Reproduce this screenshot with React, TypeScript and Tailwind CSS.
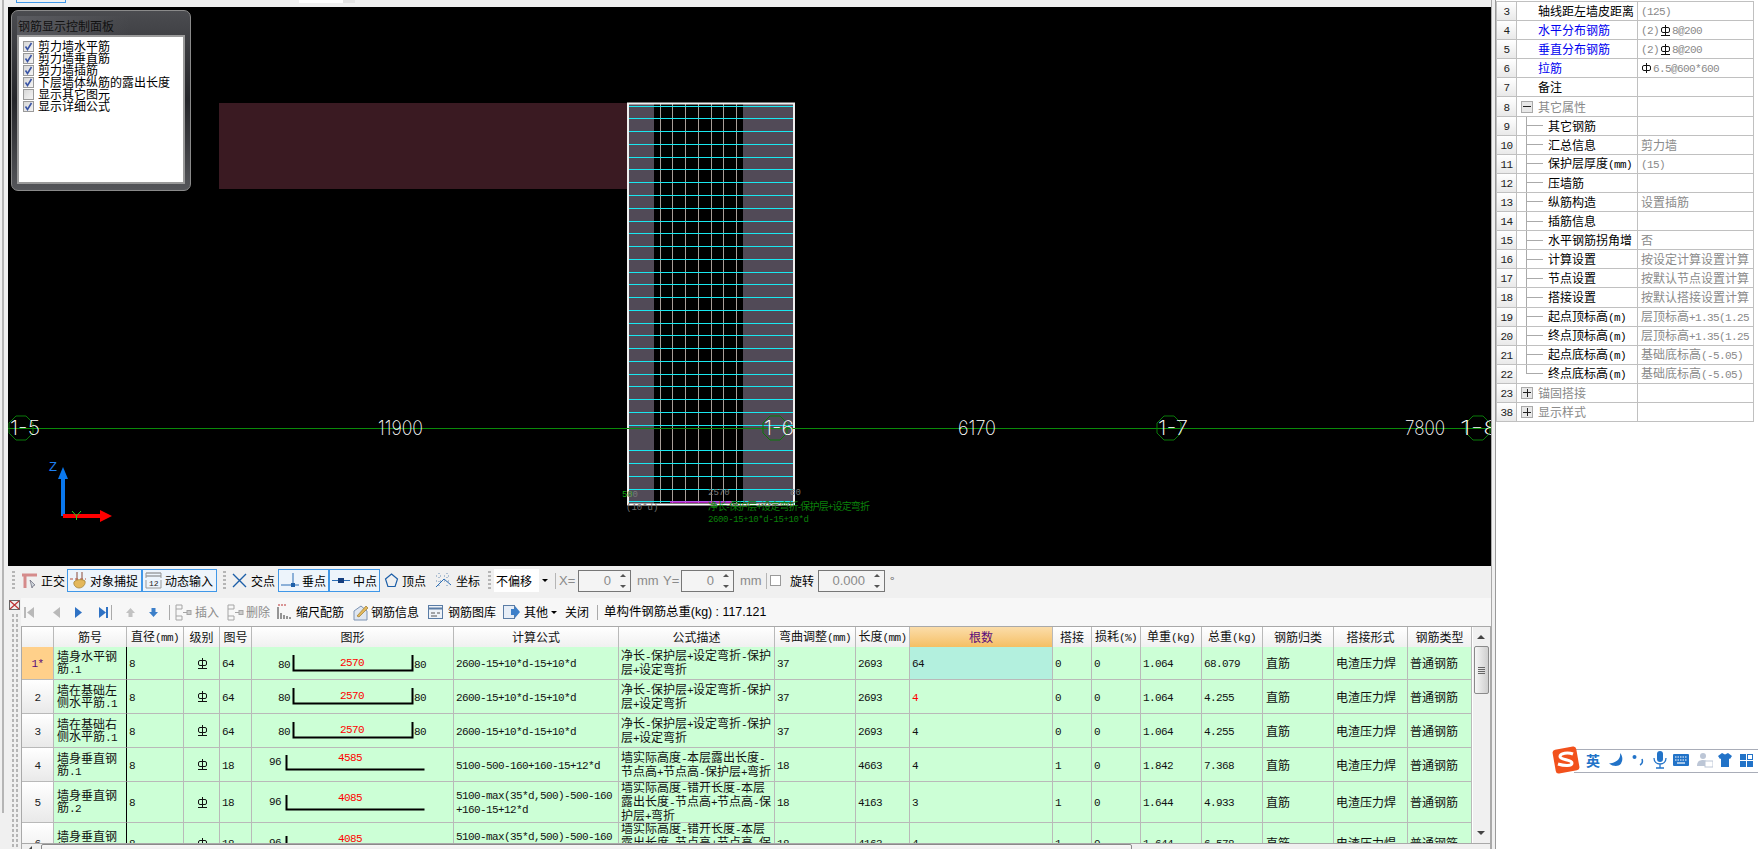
import React from 'react';

const COLS = 'grid-cols-[32px_73px_57px_36px_32px_202px_165px_156px_81px_54px_143px_39px_49px_61px_61px_71px_74px_64px]';
const CJK = "[font-family:'Noto_Sans_CJK_SC','Liberation_Sans',sans-serif]";

// half-width runs go in a 6px-wide mono so they sit like the old bitmap font
function Mixed({ text }: { text: string }) {
  return (
    <>
      {text.split(/([\x00-\x7f]+)/).map((part, i) =>
        /^[\x00-\x7f]+$/.test(part) ? (
          <span key={i} className="[font-family:'Liberation_Mono',monospace] text-[11px] tracking-[-0.6px] whitespace-pre">{part}</span>
        ) : (
          <span key={i}>{part}</span>
        )
      )}
    </>
  );
}

function RebarMark({ base = true }: { base?: boolean }) {
  return (
    <svg width="11" height="11" viewBox="0 0 11 11" className="inline-block align-[-1px]" fill="none" stroke="#111" strokeWidth="1">
      <rect x="1.5" y="2.5" width="8" height="5" rx="1.5" />
      <path d="M5.5 0v10" />
      {base && <path d="M1 10.5h9" />}
    </svg>
  );
}

function Grip() {
  return <div className="w-[3px] h-[20px] bg-[repeating-linear-gradient(to_bottom,#b5b5b5_0,#b5b5b5_2px,transparent_2px,transparent_4px)]" />;
}

function SnapBtn({ w, icon, label, on }: { w: string; icon: React.ReactNode; label: string; on?: boolean }) {
  return (
    <div className={`${w} h-[23px] flex items-center gap-[3px] pl-[2px] text-[12px] text-black ${on ? 'border border-[#3f97e8] bg-[#edf4fb]' : ''}`}>
      {icon}
      <span className="whitespace-nowrap">{label}</span>
    </div>
  );
}

const Ortho = (
  <svg width="17" height="17" viewBox="0 0 17 17" fill="none">
    <path d="M1 3h15M4 3v13" stroke="#d58b8b" strokeWidth="3" />
    <path d="M9 8l5 5-2 1-1 2z" fill="#cfd6dc" stroke="#667" strokeWidth="0.7" />
  </svg>
);
const SnapIcon = (
  <svg width="17" height="18" viewBox="0 0 17 18" fill="none">
    <path d="M7 0v8M12 0v8" stroke="#8a4a3a" strokeWidth="1" />
    <path d="M0 7h16" stroke="#b5503c" strokeWidth="1" strokeDasharray="3 2" />
    <path d="M4 10c2-3 9-3 11-1 1 3-2 7-6 7-3 0-6-3-5-6z" fill="#e3b85c" stroke="#9a7a30" strokeWidth="0.7" />
  </svg>
);
const DynIcon = (
  <svg width="17" height="17" viewBox="0 0 17 17" fill="none">
    <path d="M1 1h15M1 4h15" stroke="#777" strokeWidth="1" />
    <path d="M1 1v5M16 1v5M1 16h15M1 8v8M16 8v8" stroke="#999" strokeWidth="1" />
    <text x="4" y="14" fontSize="8" fill="#222" fontFamily="Liberation Mono">12</text>
  </svg>
);
const CrossIcon = (
  <svg width="17" height="17" viewBox="0 0 17 17" fill="none" stroke="#1d5fa8" strokeWidth="1.4">
    <path d="M2 2l13 13M15 2L2 15" />
  </svg>
);
const PerpIcon = (
  <svg width="18" height="15" viewBox="0 0 18 15" fill="none">
    <path d="M0 12h18M12 0v12" stroke="#2a6db5" strokeWidth="1" />
    <rect x="10" y="10" width="4" height="4" fill="#1d5fa8" />
  </svg>
);
const MidIcon = (
  <svg width="18" height="9" viewBox="0 0 18 9" fill="none">
    <path d="M0 4.5h18" stroke="#2a6db5" strokeWidth="1" />
    <rect x="6" y="2" width="6" height="5" fill="#153f80" />
  </svg>
);
const VertexIcon = (
  <svg width="15" height="15" viewBox="0 0 15 15" fill="none" stroke="#1d5fa8" strokeWidth="1.2">
    <path d="M7.5 1l6 5-2.4 7.5H3.9L1.5 6z" />
  </svg>
);
const CoordIcon = (
  <svg width="19" height="17" viewBox="0 0 19 17" fill="none">
    <path d="M2 15L10 7l7 6" stroke="#2a6db5" strokeWidth="1" />
    <path d="M2 4h15M2 9h15M5 1v15M13 1v15" stroke="#6a8db5" strokeWidth="1" strokeDasharray="1 3" />
  </svg>
);

function SnapBar() {
  return (
    <div className={`h-[32px] shrink-0 bg-[#f0f0f0] flex items-center pl-[4px] pb-[3px] ${CJK}`}>
      <Grip />
      <div className="ml-[4px]"><SnapBtn w="w-[48px]" icon={Ortho} label="正交" /></div>
      <SnapBtn w="w-[75px]" on icon={SnapIcon} label="对象捕捉" />
      <SnapBtn w="w-[75px]" on icon={DynIcon} label="动态输入" />
      <div className="ml-[6px]"><Grip /></div>
      <div className="ml-[3px]"><SnapBtn w="w-[49px]" icon={CrossIcon} label="交点" /></div>
      <SnapBtn w="w-[51px]" on icon={PerpIcon} label="垂点" />
      <SnapBtn w="w-[51px]" on icon={MidIcon} label="中点" />
      <div className="ml-[2px]"><SnapBtn w="w-[50px]" icon={VertexIcon} label="顶点" /></div>
      <SnapBtn w="w-[53px]" icon={CoordIcon} label="坐标" />
      <div className="ml-[3px]"><Grip /></div>
      <div className="ml-[3px] w-[57px] h-[23px] bg-white flex items-center justify-between text-[12px] pl-[2px]">
        <span>不偏移</span>
        <span className="w-[12px] h-full bg-[#f0f0f0] flex items-center justify-center">
          <span className="border-x-[3px] border-t-[3px] border-x-transparent border-t-black" />
        </span>
      </div>
      <div className="ml-[4px] h-[16px] border-l border-[#b5b5b5]" />
      <span className="ml-[3px] w-[19px] text-[#8a8a8a] text-[13px] [font-family:'Liberation_Sans',sans-serif]">X=</span>
      <NumBox w="w-[53px]" value="0" />
      <span className="ml-[6px] w-[26px] text-[#8a8a8a] text-[13px] [font-family:'Liberation_Sans',sans-serif]">mm</span>
      <span className="w-[18px] text-[#8a8a8a] text-[13px] [font-family:'Liberation_Sans',sans-serif]">Y=</span>
      <NumBox w="w-[53px]" value="0" />
      <span className="ml-[6px] w-[22px] text-[#8a8a8a] text-[13px] [font-family:'Liberation_Sans',sans-serif]">mm</span>
      <div className="ml-[4px] h-[16px] border-l border-[#b5b5b5]" />
      <div className="ml-[3px] w-[11px] h-[11px] border border-[#9a9a9a] bg-white" />
      <span className="ml-[9px] text-[12px] w-[28px]">旋转</span>
      <NumBox w="w-[67px]" value="0.000" />
      <span className="ml-[5px] text-[12px] text-[#666]">°</span>
    </div>
  );
}

function NumBox({ w, value }: { w: string; value: string }) {
  return (
    <div className={`${w} h-[22px] border border-[#777] bg-[#f4f4f4] flex items-center justify-end text-[13px] text-[#8a8a8a] [font-family:'Liberation_Sans',sans-serif]`}>
      <span className="mr-[7px]">{value}</span>
      <div className="w-[10px] mr-[2px] flex flex-col items-center gap-[8px]">
        <span className="border-x-[3px] border-b-[3px] border-x-transparent border-b-[#555]" />
        <span className="border-x-[3px] border-t-[3px] border-x-transparent border-t-[#555]" />
      </div>
    </div>
  );
}

function Nav({ dir, bar, color, ml }: { dir: 'l' | 'r'; bar?: boolean; color: string; ml: string }) {
  return (
    <svg width="12" height="13" viewBox="0 0 12 13" className={ml}>
      {dir === 'l' ? <path d="M10 1v11L3 6.5z" fill={color} /> : <path d="M2 1v11l7-5.5z" fill={color} />}
      {bar && <rect x={dir === 'l' ? 0 : 9} y="1" width="2" height="11" fill={color} />}
    </svg>
  );
}

function Sep({ ml }: { ml: string }) {
  return <div className={`${ml} h-[15px] border-l border-[#aaa]`} />;
}

const InsertIcon = (
  <svg width="18" height="17" viewBox="0 0 18 17" fill="none" stroke="#a5a5a5" strokeWidth="1">
    <path d="M2 1h6v4H2M2 12h6v4H2M2 1v15M9 8.5h4" />
    <rect x="13" y="6.5" width="4" height="4" fill="#ccc" />
  </svg>
);
const ScaleIcon = (
  <svg width="14" height="16" viewBox="0 0 14 16" fill="none">
    <path d="M1 1h9" stroke="#b33" strokeWidth="1" strokeDasharray="2 1" />
    <path d="M1 3v12M4 9v6M7 11v4M10 12v3M13 13v2" stroke="#333" strokeWidth="1" />
  </svg>
);
const InfoIcon = (
  <svg width="17" height="17" viewBox="0 0 17 17" fill="none">
    <path d="M2 16V7l7-5 6 5v9z" fill="#dfe6f0" stroke="#7c93b3" />
    <path d="M5 12L14 2l2 2-9 9z" fill="#e3b85c" stroke="#9a7a30" strokeWidth="0.7" />
  </svg>
);
const LibIcon = (
  <svg width="15" height="14" viewBox="0 0 15 14" fill="none">
    <rect x="0.5" y="0.5" width="14" height="13" fill="#eef2f7" stroke="#5a7ca5" />
    <path d="M1 3.5h13" stroke="#5a7ca5" strokeWidth="2" />
    <path d="M3 8h4M9 8h3M3 11h6" stroke="#555" />
  </svg>
);
const OtherIcon = (
  <svg width="17" height="14" viewBox="0 0 17 14" fill="none">
    <rect x="0.5" y="0.5" width="11" height="13" fill="#e6edf6" stroke="#5a7ca5" />
    <path d="M8 4h4V1l5 6-5 6v-3H8z" fill="#3c7fc9" />
  </svg>
);

function RebarBar() {
  return (
    <div className={`h-[28px] shrink-0 bg-[#f7f7f7] flex items-center text-[12px] ${CJK}`}>
      <Nav dir="l" bar color="#b9b9b9" ml="ml-[3px]" />
      <Nav dir="l" color="#b9b9b9" ml="ml-[14px]" />
      <Nav dir="r" color="#2f72c4" ml="ml-[11px]" />
      <Nav dir="r" bar color="#2f72c4" ml="ml-[12px]" />
      <Sep ml="ml-[2px]" />
      <svg width="11" height="11" viewBox="0 0 11 11" className="ml-[13px]"><path d="M5.5 1l4.5 5H7.5v4h-4V6H1z" fill="#c2c2c2" /></svg>
      <svg width="11" height="11" viewBox="0 0 11 11" className="ml-[12px]"><path d="M5.5 10L1 5h2.5V1h4v4H10z" fill="#3c7fc9" /></svg>
      <Sep ml="ml-[10px]" />
      <div className="ml-[4px]">{InsertIcon}</div>
      <span className="ml-[3px] text-[#8c8c8c]">插入</span>
      <div className="ml-[7px]">{InsertIcon}</div>
      <span className="ml-[2px] text-[#8c8c8c]">删除</span>
      <div className="ml-[7px]">{ScaleIcon}</div>
      <span className="ml-[5px]">缩尺配筋</span>
      <div className="ml-[8px]">{InfoIcon}</div>
      <span className="ml-[2px]">钢筋信息</span>
      <div className="ml-[9px]">{LibIcon}</div>
      <span className="ml-[5px]">钢筋图库</span>
      <div className="ml-[7px]">{OtherIcon}</div>
      <span className="ml-[4px]">其他</span>
      <span className="ml-[3px] border-x-[3px] border-t-[3px] border-x-transparent border-t-black" />
      <span className="ml-[8px]">关闭</span>
      <Sep ml="ml-[8px]" />
      <span className="ml-[6px] text-[12.4px] [font-family:'Liberation_Sans','Noto_Sans_CJK_SC',sans-serif] whitespace-nowrap">单构件钢筋总重(kg) : 117.121</span>
    </div>
  );
}

const HEADERS = ['', '筋号', '直径(mm)', '级别', '图号', '图形', '计算公式', '公式描述', '弯曲调整(mm)', '长度(mm)', '根数', '搭接', '损耗(%)', '单重(kg)', '总重(kg)', '钢筋归类', '搭接形式', '钢筋类型'];

type Row = {
  h: string;
  no: string;
  name: string[];
  fig: string;
  shape: { left: string; mid: string; right?: string };
  calc: string[];
  desc: string[];
  bend: string;
  len: string;
  count: string;
  lap: string;
  unit: string;
  total: string;
};

const DESC1 = ['净长-保护层+设定弯折-保护', '层+设定弯折'];
const CALC1 = ['2600-15+10*d-15+10*d'];
const DESC5 = ['墙实际高度-错开长度-本层', '露出长度-节点高+节点高-保', '护层+弯折'];
const CALC5 = ['5100-max(35*d,500)-500-160', '+160-15+12*d'];

const ROWS: Row[] = [
  { h: 'h-[33px]', no: '1*', name: ['墙身水平钢', '筋.1'], fig: '64', shape: { left: '80', mid: '2570', right: '80' }, calc: CALC1, desc: DESC1, bend: '37', len: '2693', count: '64', lap: '0', unit: '1.064', total: '68.079' },
  { h: 'h-[34px]', no: '2', name: ['墙在基础左', '侧水平筋.1'], fig: '64', shape: { left: '80', mid: '2570', right: '80' }, calc: CALC1, desc: DESC1, bend: '37', len: '2693', count: '4', lap: '0', unit: '1.064', total: '4.255' },
  { h: 'h-[34px]', no: '3', name: ['墙在基础右', '侧水平筋.1'], fig: '64', shape: { left: '80', mid: '2570', right: '80' }, calc: CALC1, desc: DESC1, bend: '37', len: '2693', count: '4', lap: '0', unit: '1.064', total: '4.255' },
  { h: 'h-[34px]', no: '4', name: ['墙身垂直钢', '筋.1'], fig: '18', shape: { left: '96', mid: '4585' }, calc: ['5100-500-160+160-15+12*d'], desc: ['墙实际高度-本层露出长度-', '节点高+节点高-保护层+弯折'], bend: '18', len: '4663', count: '4', lap: '1', unit: '1.842', total: '7.368' },
  { h: 'h-[41px]', no: '5', name: ['墙身垂直钢', '筋.2'], fig: '18', shape: { left: '96', mid: '4085' }, calc: CALC5, desc: DESC5, bend: '18', len: '4163', count: '3', lap: '1', unit: '1.644', total: '4.933' },
  { h: 'h-[41px]', no: '6', name: ['墙身垂直钢', '筋.3'], fig: '18', shape: { left: '96', mid: '4085' }, calc: CALC5, desc: DESC5, bend: '18', len: '4163', count: '4', lap: '1', unit: '1.644', total: '6.578' },
];

function Shape({ s, tall }: { s: Row['shape']; tall: boolean }) {
  const mono = 'Liberation Mono';
  if (s.right) {
    return (
      <svg width="201" height="33" viewBox="0 0 201 33" className="block">
        <text x="26" y="21" fontSize="11" letterSpacing="-0.6" fontFamily={mono} fill="#111">{s.left}</text>
        <path d="M41.5 8v15.5h119V8" fill="none" stroke="#000" strokeWidth="2" />
        <text x="100" y="19" fontSize="11" letterSpacing="-0.6" fontFamily={mono} fill="#f00" textAnchor="middle">{s.mid}</text>
        <text x="162" y="21" fontSize="11" letterSpacing="-0.6" fontFamily={mono} fill="#111">{s.right}</text>
      </svg>
    );
  }
  const top = tall ? 13 : 10;
  return (
    <svg width="201" height="40" viewBox="0 0 201 40" className="block">
      <text x="17" y={top + 10} fontSize="11" letterSpacing="-0.6" fontFamily={mono} fill="#111">{s.left}</text>
      <path d={`M34.5 ${top}v14.5h138`} fill="none" stroke="#000" strokeWidth="2" />
      <text x="98" y={top + 6} fontSize="11" letterSpacing="-0.6" fontFamily={mono} fill="#f00" textAnchor="middle">{s.mid}</text>
    </svg>
  );
}

function Lines({ lines }: { lines: string[] }) {
  return (
    <div className="leading-[12px]">
      {lines.map((l, i) => (
        <div key={i} className="whitespace-nowrap"><Mixed text={l} /></div>
      ))}
    </div>
  );
}

const CELL = 'border-r border-b border-[#b9b9b9] flex items-center overflow-hidden bg-[#ccffd6] text-[12px] text-[#111] pl-[2px]';

function TableRow({ row, idx }: { row: Row; idx: number }) {
  const first = idx === 0;
  const plain = (v: string) => <div className={CELL}><span><Mixed text={v} /></span></div>;
  return (
    <div className={`grid ${COLS} ${row.h}`}>
      <div className={`border-r border-b border-[#b9b9b9] flex items-center justify-center text-[12px] ${first ? 'bg-[#ffd08a] text-[#5a0a7a]' : 'bg-gradient-to-b from-white to-[#e9e9e9] text-[#222]'}`}>
        <span><Mixed text={row.no} /></span>
      </div>
      <div className={`${CELL} !border-r-black pl-[3px]`}><Lines lines={row.name} /></div>
      {plain('8')}
      <div className={`${CELL} justify-center`}><RebarMark /></div>
      {plain(row.fig)}
      <div className={`${CELL} !pl-0`}><Shape s={row.shape} tall={row.h === 'h-[41px]'} /></div>
      <div className={CELL}><Lines lines={row.calc} /></div>
      <div className={CELL}><Lines lines={row.desc} /></div>
      {plain(row.bend)}
      {plain(row.len)}
      <div className={`${CELL} ${first ? '!bg-[#b3f0de]' : ''} ${idx === 1 ? '!text-[#f00]' : ''}`}><span><Mixed text={row.count} /></span></div>
      {plain(row.lap)}
      {plain('0')}
      {plain(row.unit)}
      {plain(row.total)}
      <div className={`${CELL} pl-[3px]`}>直筋</div>
      <div className={`${CELL} pl-[2px]`}>电渣压力焊</div>
      <div className={`${CELL} pl-[2px]`}>普通钢筋</div>
    </div>
  );
}

function RebarTable() {
  return (
    <div className={`flex-1 min-h-0 border-t border-l border-r border-[#a9a9a9] ${CJK}`}>
      <div className="flex">
        <div className="w-[1450px] shrink-0">
          <div className={`grid ${COLS} h-[20px]`}>
            {HEADERS.map((h, i) => (
              <div
                key={i}
                className={`border-r border-b border-[#b9b9b9] flex items-center justify-center text-[12px] whitespace-nowrap ${h === '根数' ? 'bg-gradient-to-b from-[#fbdda9] to-[#f5bf62] text-[#5a0a7a]' : 'bg-gradient-to-b from-white to-[#f0f0f0] text-[#111]'}`}
              >
                <span><Mixed text={h} /></span>
              </div>
            ))}
          </div>
          <div className="h-[196px] overflow-hidden">
            {ROWS.map((r, i) => (
              <TableRow key={r.no} row={r} idx={i} />
            ))}
          </div>
        </div>
        <div className="w-[17px] h-[216px] bg-[#f0f0f0] flex flex-col items-center border-l border-white">
          <span className="mt-[8px] border-x-[4px] border-b-[4px] border-x-transparent border-b-[#444]" />
          <div className="mt-[7px] w-[15px] h-[48px] rounded-[2px] border border-[#8a8a8a] bg-gradient-to-r from-[#f6f6f6] to-[#cfcfcf] flex flex-col items-center justify-center gap-[1px]">
            <span className="w-[7px] h-px bg-[#666]" />
            <span className="w-[7px] h-px bg-[#666]" />
            <span className="w-[7px] h-px bg-[#666]" />
            <span className="w-[7px] h-px bg-[#666]" />
          </div>
          <span className="mt-auto mb-[8px] border-x-[4px] border-t-[4px] border-x-transparent border-t-[#444]" />
        </div>
      </div>
      <div className="h-[17px] bg-[#f0f0f0] flex items-start border-t border-[#a9a9a9]">
        <span className="ml-[7px] mt-[2px] border-y-[3px] border-r-[3px] border-y-transparent border-r-[#444]" />
        <div className="ml-[9px] w-[1091px] h-[16px] border border-[#8a8a8a] rounded-[2px] bg-gradient-to-b from-[#f8f8f8] to-[#dcdcdc]" />
      </div>
    </div>
  );
}

const CHECKS: [string, boolean][] = [
  ['剪力墙水平筋', true],
  ['剪力墙垂直筋', true],
  ['剪力墙插筋', true],
  ['下层墙体纵筋的露出长度', true],
  ['显示其它图元', false],
  ['显示详细公式', true],
];

function ControlPanel() {
  return (
    <div className={`absolute left-[3px] top-[3px] w-[180px] h-[181px] rounded-[7px] border border-[#8a8a8a] bg-gradient-to-b from-[#4b4c50] via-[#25262a] to-[#55565a] p-[5px] ${CJK}`}>
      <div className="h-[19px] w-[112px] flex items-center pl-[1px] text-[12px] text-[#111] bg-gradient-to-r from-[#5a5b60] to-transparent">钢筋显示控制面板</div>
      <div className="h-[149px] border-2 border-[#9a9a9a] bg-white p-[1px]">
        <div className="h-full border-2 border-white pl-[1px]">
          {CHECKS.map(([label, on]) => (
            <div key={label} className="h-[12px] flex items-center text-[12px] leading-[12px] text-black whitespace-nowrap">
              <div className="w-[11px] h-[11px] border border-[#9a9a9a] bg-gradient-to-br from-[#d8d8d8] to-[#f4f4f4] shrink-0 flex items-center justify-center">
                {on && (
                  <svg width="9" height="9" viewBox="0 0 9 9" fill="none" stroke="#3a55a5" strokeWidth="1.6">
                    <path d="M1.5 4.5l2 3 4-6.5" />
                  </svg>
                )}
              </div>
              <span className="ml-[4px]">{label}</span>
            </div>
          ))}
        </div>
      </div>
    </div>
  );
}

const VERT = [660, 672, 685, 698, 711, 723, 736];
const CYAN = [
  106, 118, 131, 144, 157, 169, 182, 195, 208, 221, 233, 246, 259, 272, 284, 297, 310, 323, 335, 348, 361, 374, 386, 399, 412, 425, 450, 463, 476, 489, 501,
];

function hexagon(cx: number, cy: number) {
  const pts = [];
  for (let i = 0; i < 8; i++) {
    const a = (Math.PI / 4) * i + Math.PI / 8;
    pts.push(`${cx + 13 * Math.cos(a)},${cy + 13 * Math.sin(a)}`);
  }
  return pts.join(' ');
}

function AxisLabel({ x, w, text }: { x: number; w: number; text: string }) {
  return (
    <text x={x} y="435" fontSize="20" fontWeight="200" fill="#fff" fontFamily="Inter, Liberation Sans" textLength={w} lengthAdjust="spacingAndGlyphs">
      {text}
    </text>
  );
}

function Drawing() {
  return (
    <svg width="1483" height="559" viewBox="8 7 1483 559" className="block">
      <rect x="219" y="103" width="408" height="86" fill="#3a1a22" />
      <rect x="629" y="104" width="25" height="400" fill="#514a57" />
      <rect x="743" y="104" width="50" height="400" fill="#514a57" />
      {VERT.map((x) => (
        <line key={x} x1={x + 0.5} x2={x + 0.5} y1="104" y2="503" stroke="#a89f9a" />
      ))}
      {CYAN.map((y) => (
        <line key={y} x1="629" x2="793" y1={y + 0.5} y2={y + 0.5} stroke="#19e8f0" />
      ))}
      <path d="M628 504V103.5H794V504" fill="none" stroke="#f0f0f0" strokeWidth="2" />
      <line x1="627" x2="795" y1="504.5" y2="504.5" stroke="#fff" strokeWidth="2" />
      <line x1="670" x2="732" y1="502" y2="502" stroke="#e020e0" strokeWidth="1.5" />

      <line x1="8" x2="1491" y1="428.5" y2="428.5" stroke="#0a8a0a" />
      {[21, 775, 1169, 1478].map((x) => (
        <polygon key={x} points={hexagon(x, 428)} fill="none" stroke="#0a7a0a" />
      ))}
      <AxisLabel x={10} w={30} text="1-5" />
      <AxisLabel x={378} w={45} text="11900" />
      <AxisLabel x={764} w={30} text="1-6" />
      <AxisLabel x={958} w={38} text="6170" />
      <AxisLabel x={1158} w={30} text="1-7" />
      <AxisLabel x={1405} w={40} text="7800" />
      <AxisLabel x={1460} w={40} text="1-8" />

      <g fontFamily="Liberation Mono" fontSize="9">
        <text x="622" y="497" fill="#0fae0f">50</text>
        <text x="627" y="497" fill="#7a7a7a">80</text>
        <text x="708" y="495" fill="#7a7a7a">2570</text>
        <text x="790" y="495" fill="#7a7a7a">80</text>
        <text x="626" y="510" fill="#6f6f6f">(10*d)</text>
        <text x="708" y="522" fill="#0b800b" textLength="101">2600-15+10*d-15+10*d</text>
      </g>
      <text x="708" y="510" fontSize="10" fontFamily="Noto Sans CJK SC" fill="#0b800b" textLength="162">净长-保护层+设定弯折-保护层+设定弯折</text>

      <path d="M63 516V475" stroke="#0a78ee" strokeWidth="4" />
      <path d="M63 467l-5 12h10z" fill="#0a78ee" />
      <text x="49" y="471" fontSize="13" fill="#1e7ff0" fontFamily="Liberation Sans">Z</text>
      <path d="M63 516h40" stroke="#f00" strokeWidth="4" />
      <path d="M112 516l-12-6v12z" fill="#f00" />
      <path d="M72 511l4.500 5 4.500-5M76.500 516v4" stroke="#22d022" fill="none" />
    </svg>
  );
}

type Prop = { n: string; name: string; value?: string; kind?: 'blue' | 'group' | 'child' | 'last'; open?: boolean; mark?: 'two' | 'one' };

const PROPS: Prop[] = [
  { n: '3', name: '轴线距左墙皮距离', value: '(125)' },
  { n: '4', name: '水平分布钢筋', value: '(2)', kind: 'blue', mark: 'two' },
  { n: '5', name: '垂直分布钢筋', value: '(2)', kind: 'blue', mark: 'two' },
  { n: '6', name: '拉筋', value: '', kind: 'blue', mark: 'one' },
  { n: '7', name: '备注' },
  { n: '8', name: '其它属性', kind: 'group', open: true },
  { n: '9', name: '其它钢筋', kind: 'child' },
  { n: '10', name: '汇总信息', value: '剪力墙', kind: 'child' },
  { n: '11', name: '保护层厚度(mm)', value: '(15)', kind: 'child' },
  { n: '12', name: '压墙筋', kind: 'child' },
  { n: '13', name: '纵筋构造', value: '设置插筋', kind: 'child' },
  { n: '14', name: '插筋信息', kind: 'child' },
  { n: '15', name: '水平钢筋拐角增', value: '否', kind: 'child' },
  { n: '16', name: '计算设置', value: '按设定计算设置计算', kind: 'child' },
  { n: '17', name: '节点设置', value: '按默认节点设置计算', kind: 'child' },
  { n: '18', name: '搭接设置', value: '按默认搭接设置计算', kind: 'child' },
  { n: '19', name: '起点顶标高(m)', value: '层顶标高+1.35(1.25', kind: 'child' },
  { n: '20', name: '终点顶标高(m)', value: '层顶标高+1.35(1.25', kind: 'child' },
  { n: '21', name: '起点底标高(m)', value: '基础底标高(-5.05)', kind: 'child' },
  { n: '22', name: '终点底标高(m)', value: '基础底标高(-5.05)', kind: 'last' },
  { n: '23', name: '锚固搭接', kind: 'group' },
  { n: '38', name: '显示样式', kind: 'group' },
];

function PropRow({ p }: { p: Prop }) {
  const isTree = p.kind === 'child' || p.kind === 'last';
  return (
    <div className="grid grid-cols-[20px_121px_116px] h-[19.1px] border-b border-[#c0c0c0] text-[12px] leading-[12px]">
      <div className="border-r border-[#c0c0c0] bg-gradient-to-b from-white to-[#e9e9e9] flex items-center justify-center text-[#222]">
        <span><Mixed text={p.n} /></span>
      </div>
      <div className="border-r border-[#c0c0c0] flex items-center whitespace-nowrap overflow-hidden h-full">
        {isTree && (
          <div className={`ml-[9px] w-[17px] shrink-0 border-l border-[#aaa] ${p.kind === 'last' ? 'h-1/2 self-start border-b' : 'h-full flex items-center'}`}>
            {p.kind === 'child' && <div className="w-full h-px bg-[#aaa]" />}
          </div>
        )}
        {p.kind === 'group' && (
          <div className="ml-[4px] w-[12px] h-[12px] shrink-0 border border-[#aaa] bg-[#e8e8e8] flex items-center justify-center relative">
            <span className="w-[8px] h-px bg-[#222]" />
            {!p.open && <span className="absolute w-px h-[8px] bg-[#222]" />}
          </div>
        )}
        <span
          className={
            isTree
              ? 'ml-[5px] text-black'
              : p.kind === 'group'
                ? 'ml-[5px] text-[#8a8a8a]'
                : p.kind === 'blue'
                  ? 'ml-[21px] text-[#0000f0]'
                  : 'ml-[21px] text-black'
          }
        >
          <Mixed text={p.name} />
        </span>
      </div>
      <div className="flex items-center gap-[1px] pl-[3px] text-[#8a8a8a] whitespace-nowrap overflow-hidden">
        {p.value && <span><Mixed text={p.value} /></span>}
        {p.mark === 'two' && (
          <>
            <RebarMark />
            <span><Mixed text="8@200" /></span>
          </>
        )}
        {p.mark === 'one' && (
          <>
            <RebarMark base={false} />
            <span><Mixed text="6.5@600*600" /></span>
          </>
        )}
      </div>
    </div>
  );
}

function ImeBar() {
  return (
    <div className={`absolute left-[1552px] top-[746px] h-[28px] w-[206px] flex items-center ${CJK}`}>
      <div className="absolute left-[22px] right-0 top-[3px] h-[24px] bg-white border-y border-[#a9adb8]" />
      <svg width="29" height="28" viewBox="0 0 29 28" className="relative shrink-0">
        <rect x="2" y="2" width="24" height="24" rx="3" transform="rotate(-10 14 14)" fill="#f2511c" />
        <path d="M21 8c-5-2-13-1-13 2.500s12 3 12 6.500-8 3-14 1" fill="none" stroke="#fff" strokeWidth="3" />
      </svg>
      <span className="relative ml-[5px] w-[15px] text-[14px] leading-none font-bold text-[#2273c8]">英</span>
      <svg width="15" height="14" viewBox="0 0 15 14" className="relative ml-[8px]"><path d="M11 0C12 5 8 10 0 10.500 3 13 7 13.500 9.500 12.500 13.500 11 15 4 11 0z" fill="#2273c8" /></svg>
      <svg width="12" height="14" viewBox="0 0 12 14" className="relative ml-[8px]"><circle cx="2.500" cy="4" r="2" fill="#2273c8" /><path d="M10 6c1 3 0 5-2 6" fill="none" stroke="#2273c8" strokeWidth="1.500" /></svg>
      <svg width="14" height="18" viewBox="0 0 14 18" className="relative ml-[9px]">
        <rect x="4" y="0" width="6" height="11" rx="3" fill="#2273c8" />
        <path d="M1 7c0 8 12 8 12 0M7 13v4M3 17h8" fill="none" stroke="#2273c8" strokeWidth="1.300" />
      </svg>
      <svg width="16" height="12" viewBox="0 0 16 12" className="relative ml-[6px]">
        <rect width="16" height="12" rx="1" fill="#2273c8" />
        <path d="M2 3h12M2 6h12" stroke="#fff" strokeWidth="1" strokeDasharray="1.500 1" />
        <path d="M4 9h8" stroke="#fff" strokeWidth="1.200" />
      </svg>
      <svg width="16" height="16" viewBox="0 0 16 16" className="relative ml-[8px]">
        <circle cx="6" cy="4" r="3" fill="#bcc6d6" />
        <path d="M0 14c0-5 3-6 6-6s4 1 4 2v4z" fill="#bcc6d6" />
        <rect x="8" y="9" width="8" height="6" fill="#fff" stroke="#bcc6d6" />
      </svg>
      <svg width="14" height="14" viewBox="0 0 14 14" className="relative ml-[5px]"><path d="M4 0l3 1.500L10 0l4 3-2 3-1-.5V14H3V5.500L2 6 0 3z" fill="#2273c8" /></svg>
      <svg width="13" height="13" viewBox="0 0 13 13" className="relative ml-[8px]">
        <rect width="6" height="6" fill="#2273c8" />
        <rect x="7.500" y="0.500" width="5" height="5" fill="#fff" stroke="#2273c8" />
        <rect y="7" width="6" height="6" fill="#2273c8" />
        <rect x="7" y="7" width="6" height="6" fill="#2273c8" />
      </svg>
    </div>
  );
}

export default function App() {
  return (
    <div className="relative w-[1758px] h-[849px] overflow-hidden flex bg-white">
      <div className="w-[8px] shrink-0 bg-[#f0f0f0] pl-[2px]">
        <div className="w-[2px] h-[813px] bg-[#b5b5b5]" />
      </div>
      <div className="w-[1483px] shrink-0 flex flex-col">
        <div className="h-[7px] shrink-0 bg-[#f0f0f0] flex items-start">
          <div className="ml-[8px] w-[50px] h-[3px] border-x border-b border-[#3f97e8]" />
          <div className="ml-[233px] w-[44px] h-[3px] bg-white" />
          <div className="w-[12px] h-[3px] bg-[#e4e4e4]" />
        </div>
        <div className="relative h-[559px] shrink-0 bg-black">
          <Drawing />
          <ControlPanel />
        </div>
        <SnapBar />
        <div className="flex-1 min-h-0 flex bg-[#f0f0f0]">
          <div className="w-[13px] shrink-0 pt-[2px] pl-px">
            <svg width="11" height="10" viewBox="0 0 11 10" className="block">
              <rect x="0.500" y="0.500" width="10" height="9" fill="#eee" stroke="#666" />
              <path d="M1 1l9 8M10 1L1 9" stroke="#b33" strokeWidth="1.200" />
            </svg>
            <div className="mt-[3px] ml-[2px] w-[8px] h-[236px] bg-[radial-gradient(#b5b5b5_1px,transparent_1px)] bg-[length:4px_5px]" />
          </div>
          <div className="flex-1 min-w-0 flex flex-col">
            <RebarBar />
            <RebarTable />
          </div>
        </div>
      </div>
      <div className="flex-1 min-w-0 flex">
        <div className="w-[4px] bg-[#f0f0f0] border-l border-[#a9a9a9]" />
        <div className={`flex-1 border-l border-[#9a9a9a] bg-white ${CJK}`}>
          <div className="w-[258px] mt-px border-l border-t border-r border-[#c0c0c0]">
            {PROPS.map((p) => (
              <PropRow key={p.n} p={p} />
            ))}
          </div>
        </div>
      </div>
      <ImeBar />
    </div>
  );
}
